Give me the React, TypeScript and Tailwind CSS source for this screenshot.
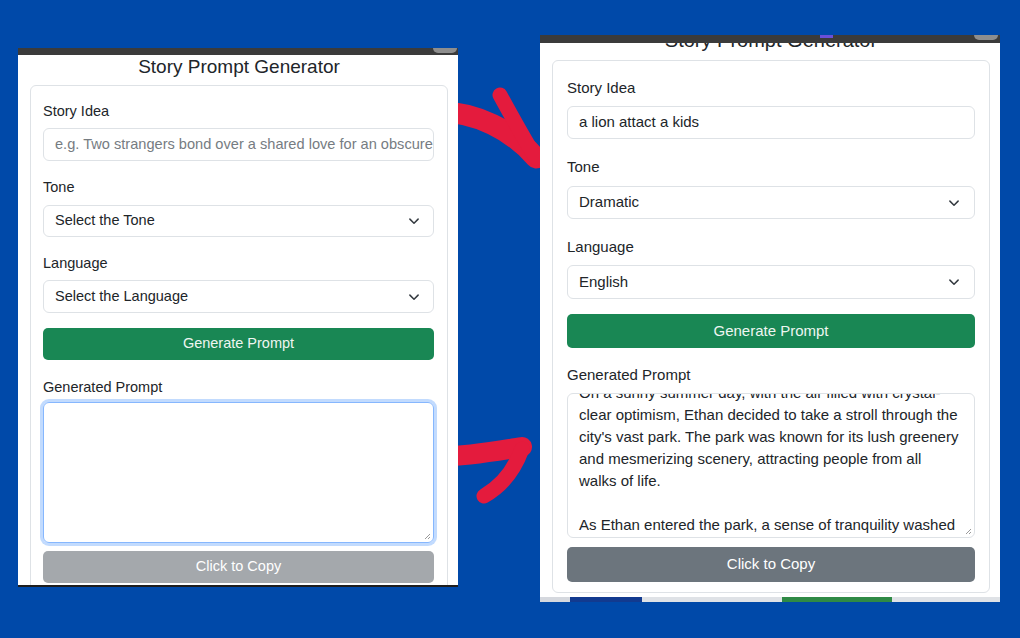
import React from "react";

// Chevron used by the selects
function Chevron() {
  return (
    <svg width="12" height="12" viewBox="0 0 16 16" fill="none">
      <path d="M2.5 5.5l5.5 5.5 5.5-5.5" stroke="#343a40" strokeWidth="2" strokeLinecap="round" strokeLinejoin="round" />
    </svg>
  );
}

// Little diagonal grip in the corner of a textarea
function Grip() {
  return (
    <svg className="absolute right-[2px] bottom-[2px]" width="8" height="8" viewBox="0 0 8 8">
      <path d="M7 2L2 7M7 5L5 7" stroke="#9a9a9a" strokeWidth="1" />
    </svg>
  );
}

const storyLines = [
  "On a sunny summer day, with the air filled with crystal-",
  "clear optimism, Ethan decided to take a stroll through the",
  "city's vast park. The park was known for its lush greenery",
  "and mesmerizing scenery, attracting people from all",
  "walks of life.",
  "\u00a0",
  "As Ethan entered the park, a sense of tranquility washed",
];

export default function App() {
  return (
    <div className="relative w-[1020px] h-[638px] bg-[#0049a9] overflow-hidden font-['Liberation_Sans',Arial,sans-serif] text-[#212529]">
      {/* Arrows (behind the screenshots) */}
      <svg className="absolute inset-0" width="1020" height="638" viewBox="0 0 1020 638" fill="none">
        <path d="M440 112 C476 112 512 130 536 158" stroke="#e41b3d" strokeWidth="21" strokeLinecap="round" />
        <path d="M500 95 C512 117 524 139 536 158" stroke="#e41b3d" strokeWidth="15" strokeLinecap="round" />
        <path d="M440 457 C470 456 498 451 522 447" stroke="#e41b3d" strokeWidth="20" strokeLinecap="round" />
        <path d="M522 449 C514 471 500 487 484 496" stroke="#e41b3d" strokeWidth="15" strokeLinecap="round" />
      </svg>

      <div className="relative z-10 flex items-start">
        {/* Left: empty form */}
        <div className="ml-[18px] mt-[48px] w-[440px] flex flex-col">
          <div className="h-[7px] bg-[#3b3b3b] flex justify-end">
            <div className="w-[24px] h-[5px] mr-[1px] rounded-b-full bg-[#8e8e8e]" />
          </div>
          <div className="h-[530px] bg-white overflow-hidden pl-[12px] pr-[10px]">
            <h1 className="text-center text-[19px] leading-[24px]">Story Prompt Generator</h1>
            <div className="mt-[6px] border border-[#dee2e6] rounded-[6px] pt-[15px] pl-[12px] pr-[13px] pb-[12px] text-[14.5px]">
              <div className="leading-[20px] mb-[7px]">Story Idea</div>
              <div className="h-[33px] border border-[#dee2e6] rounded-[6px] px-[11px] flex items-center text-[14.6px] text-[#767c82] whitespace-nowrap overflow-hidden">
                e.g. Two strangers bond over a shared love for an obscure
              </div>

              <div className="leading-[20px] mt-[16px] mb-[8px]">Tone</div>
              <div className="h-[32px] border border-[#dee2e6] rounded-[6px] pl-[11px] pr-[13px] flex items-center justify-between">
                <span>Select the Tone</span>
                <Chevron />
              </div>

              <div className="leading-[20px] mt-[16px] mb-[7px]">Language</div>
              <div className="h-[33px] border border-[#dee2e6] rounded-[6px] pl-[11px] pr-[13px] flex items-center justify-between">
                <span>Select the Language</span>
                <Chevron />
              </div>

              <div className="mt-[15px] h-[32px] rounded-[5px] bg-[#198754] text-[#eef6f1] flex items-center justify-center">
                Generate Prompt
              </div>

              <div className="leading-[20px] mt-[17px] mb-[5px]">Generated Prompt</div>
              <div className="relative h-[141px] border border-[#86b7fe] rounded-[6px] shadow-[0_0_0_3px_rgba(13,110,253,0.25)]">
                <Grip />
              </div>

              <div className="mt-[8px] h-[32px] rounded-[5px] bg-[#a4a8ac] text-white flex items-center justify-center">
                Click to Copy
              </div>
            </div>
          </div>
          <div className="h-[2px] bg-[#1e1e1e]" />
        </div>

        {/* Right: filled form */}
        <div className="ml-[82px] mt-[35px] w-[460px] flex flex-col">
          <div className="relative h-[8px] bg-[#3b3b3b] flex justify-end">
            <div className="absolute left-[280px] top-0 w-[13px] h-[3px] bg-[#6a4fd8]" />
            <div className="w-[24px] h-[5px] mr-[2px] rounded-b-full bg-[#8e8e8e]" />
          </div>
          <div className="h-[554px] bg-white overflow-hidden pl-[12px] pr-[10px]">
            <h1 className="-mt-[15px] text-center text-[20px] leading-[24px]">Story Prompt Generator</h1>
            <div className="mt-[8px] border border-[#dee2e6] rounded-[6px] pt-[16px] pl-[14px] pr-[14px] pb-[10px] text-[15px]">
              <div className="leading-[21px] mb-[8px]">Story Idea</div>
              <div className="h-[33px] border border-[#dee2e6] rounded-[6px] px-[11px] flex items-center">
                a lion attact a kids
              </div>

              <div className="leading-[21px] mt-[17px] mb-[9px]">Tone</div>
              <div className="h-[33px] border border-[#dee2e6] rounded-[6px] pl-[11px] pr-[14px] flex items-center justify-between">
                <span>Dramatic</span>
                <Chevron />
              </div>

              <div className="leading-[21px] mt-[17px] mb-[8px]">Language</div>
              <div className="h-[34px] border border-[#dee2e6] rounded-[6px] pl-[11px] pr-[14px] flex items-center justify-between">
                <span>English</span>
                <Chevron />
              </div>

              <div className="mt-[15px] h-[34px] rounded-[5px] bg-[#198754] text-[#eef6f1] flex items-center justify-center">
                Generate Prompt
              </div>

              <div className="leading-[21px] mt-[16px] mb-[8px]">Generated Prompt</div>
              <div className="relative h-[145px] border border-[#dee2e6] rounded-[6px] overflow-hidden pl-[11px]">
                <div className="-mt-[12px] leading-[22px]">
                  {storyLines.map((line, i) => (
                    <div key={i} className="whitespace-nowrap">{line}</div>
                  ))}
                </div>
                <Grip />
              </div>

              <div className="mt-[9px] h-[35px] rounded-[5px] bg-[#6c757d] text-white flex items-center justify-center">
                Click to Copy
              </div>
            </div>
          </div>
          {/* bottom strip of the captured page */}
          <div className="h-[5px] flex">
            <div className="w-[30px] bg-[#d5d8de]" />
            <div className="w-[72px] bg-[#123a8f]" />
            <div className="w-[140px] bg-[#dfe2e6]" />
            <div className="w-[110px] bg-[#2f8a45]" />
            <div className="flex-1 bg-[#dfe2e6]" />
          </div>
        </div>
      </div>
    </div>
  );
}
